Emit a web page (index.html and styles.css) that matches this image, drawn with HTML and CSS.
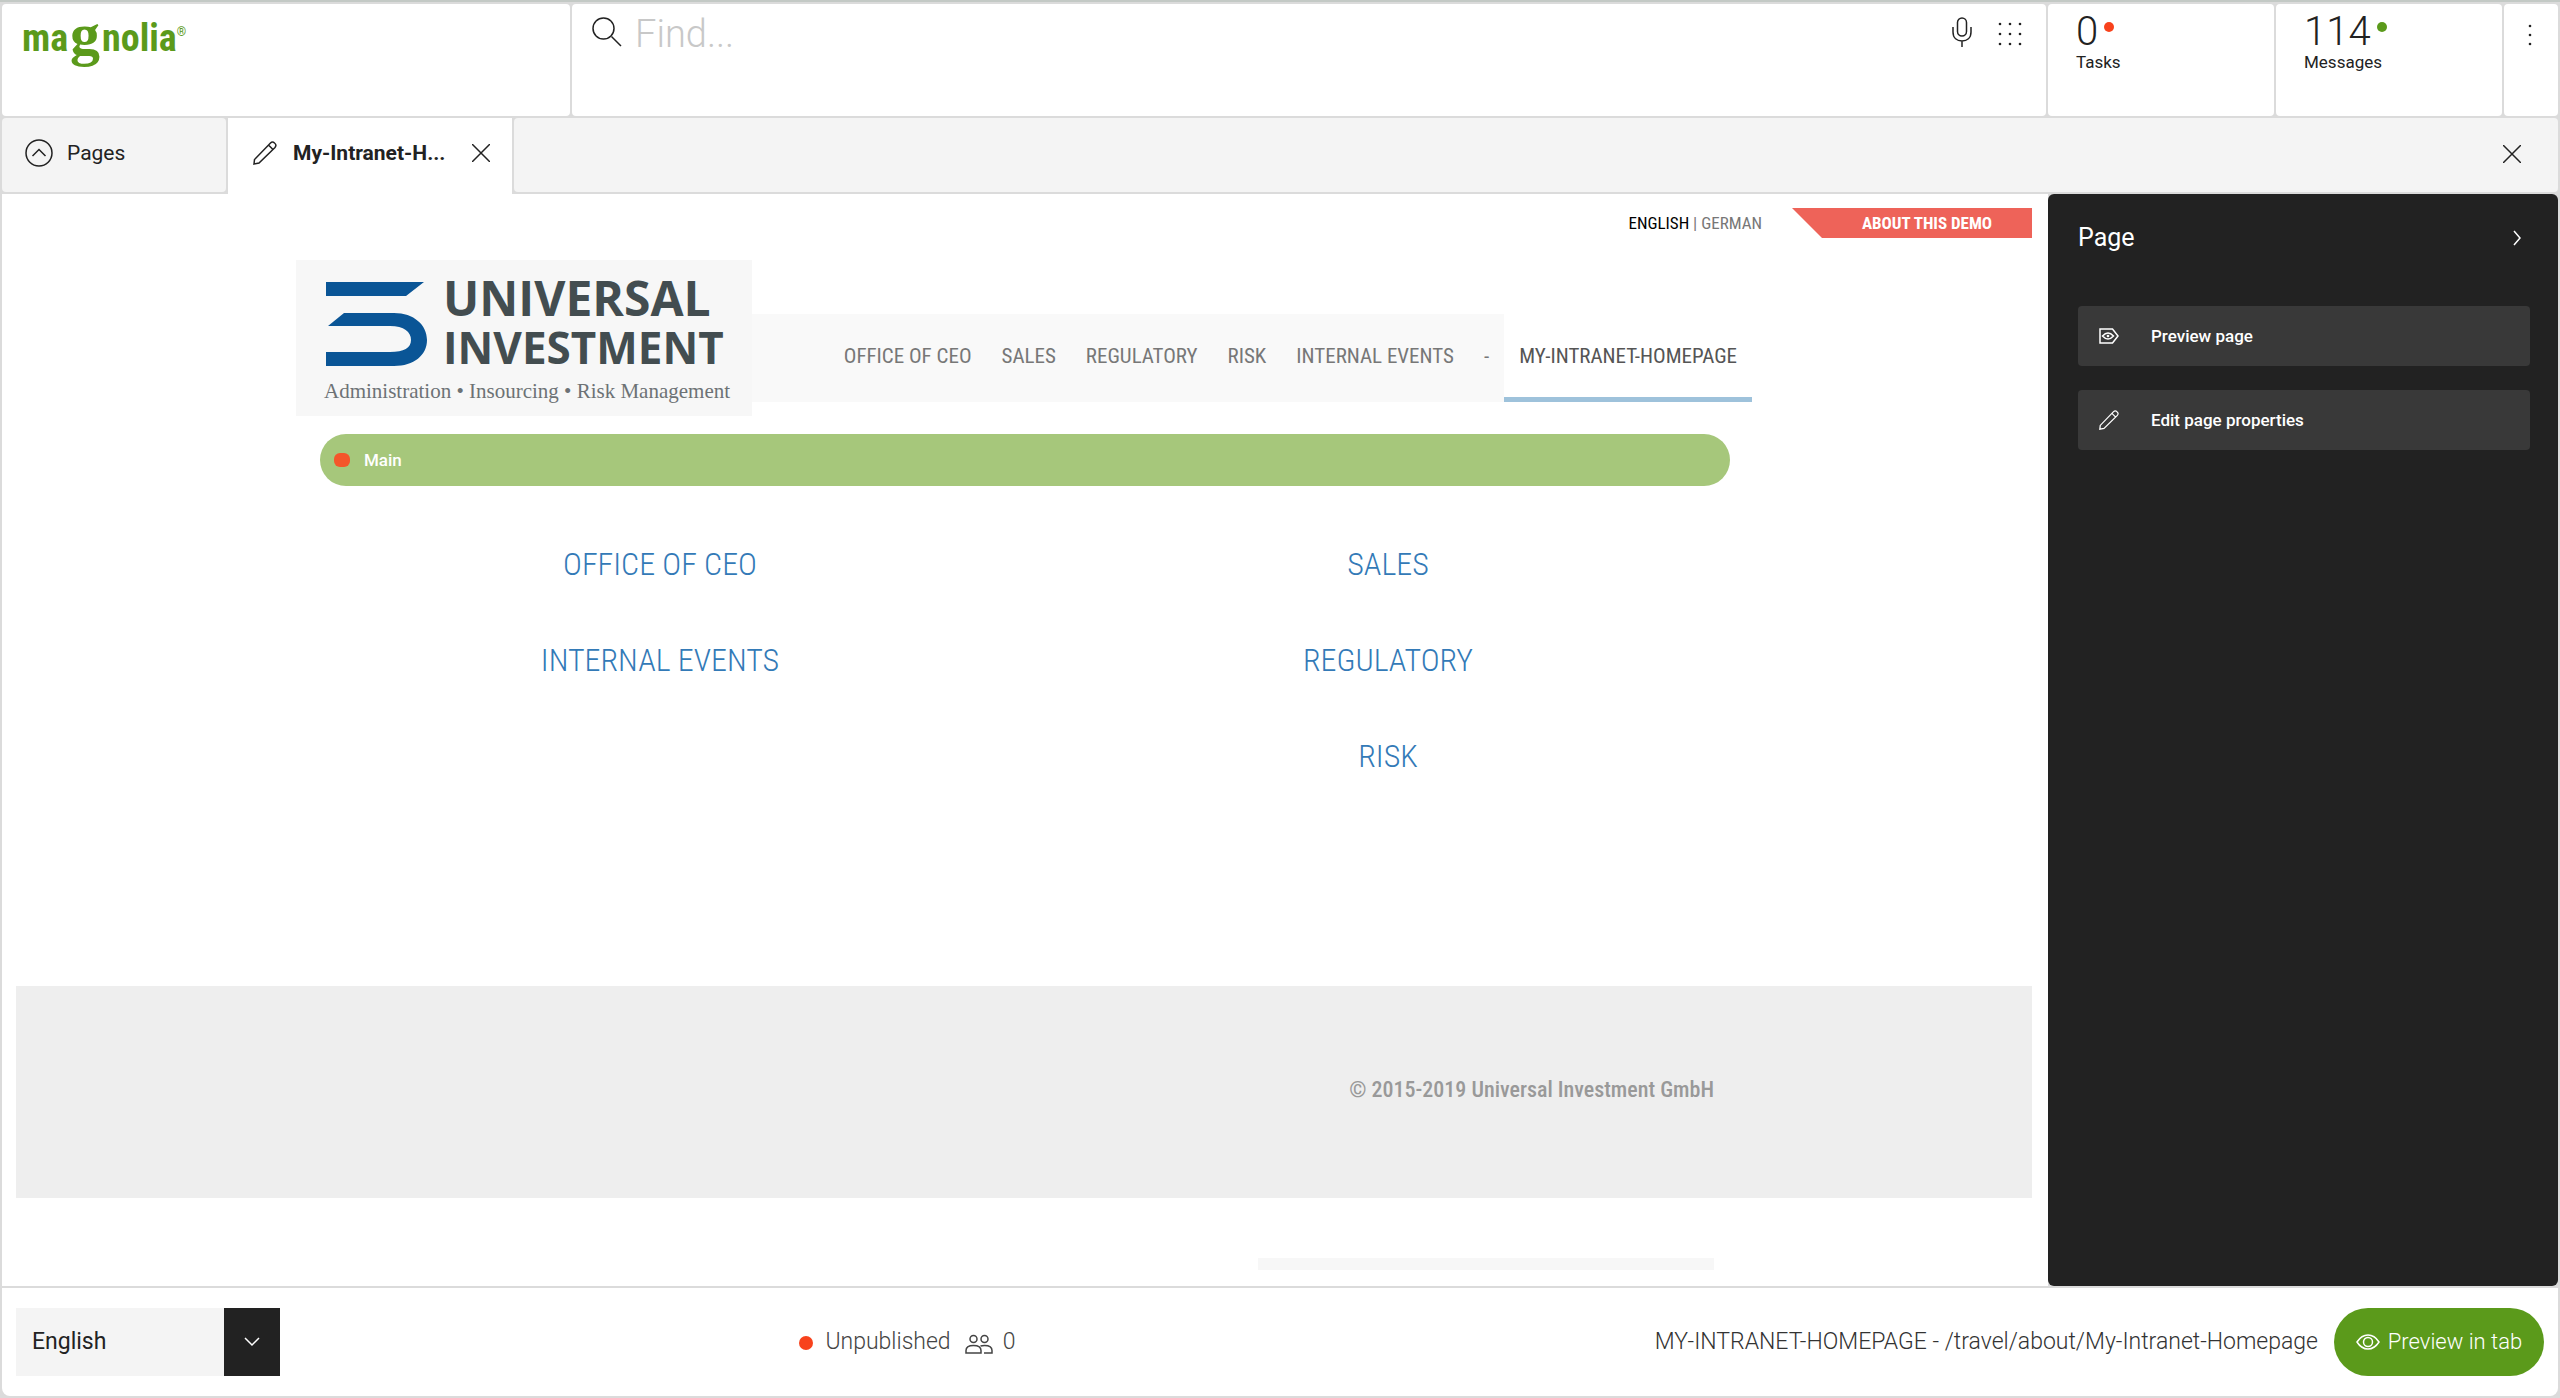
FILE: index.html
```html
<!DOCTYPE html>
<html lang="en">
<head>
<meta charset="utf-8">
<meta name="viewport" content="width=device-width, initial-scale=1">
<title>Magnolia – My-Intranet-Homepage</title>
<link rel="stylesheet" href="styles.css">
</head>
<body>
<svg class="defs" width="0" height="0" aria-hidden="true">
  <symbol id="pencil" viewBox="0 0 24 24"><path d="M1 23 1.500 18.500 17.500 2Q19.500 0 21.500 2Q24 4 22 6.500L6 22ZM15.500 4 20 8.500"/></symbol>
  <symbol id="cross" viewBox="0 0 18 18"><path d="M0 0 18 18M18 0 0 18"/></symbol>
</svg>

<header class="shell">
  <a class="card brand" href="#" aria-label="Magnolia">
    <svg class="brand-logo" width="172" height="52" viewBox="0 0 172 52">
      <text class="brand-sans" x="0" y="31">ma<tspan class="brand-serif" dx="2" dy="3">g</tspan><tspan dx="2" dy="-3">nolia</tspan><tspan class="brand-reg" dy="-15">®</tspan></text>
    </svg>
  </a>
  <form class="card search" role="search">
    <svg class="line" width="30" height="30" viewBox="0 0 30 30"><circle cx="11.500" cy="11.500" r="10.500"/><path d="M19.500 19.500 29 29"/></svg>
    <input class="search-input" type="search" placeholder="Find..." aria-label="Find">
    <button class="icon-button" type="button" aria-label="Voice search"><svg class="line" width="20" height="30" viewBox="0 0 20 30"><rect x="5.500" y="1" width="9" height="18" rx="4.500"/><path d="M1 10V15C1 21 5 24 10 24S19 21 19 15V10M10 24V30"/></svg></button>
    <button class="icon-button" type="button" aria-label="Apps"><svg class="dots" width="24" height="24" viewBox="0 0 24 24"><circle cx="2" cy="2" r="1.300"/><circle cx="12" cy="2" r="1.300"/><circle cx="22" cy="2" r="1.300"/><circle cx="2" cy="12" r="1.300"/><circle cx="12" cy="12" r="1.300"/><circle cx="22" cy="12" r="1.300"/><circle cx="2" cy="22" r="1.300"/><circle cx="12" cy="22" r="1.300"/><circle cx="22" cy="22" r="1.300"/></svg></button>
  </form>
  <a class="card counter" href="#"><span class="counter-value">0<i class="badge badge-red"></i></span><span class="counter-label">Tasks</span></a>
  <a class="card counter" href="#"><span class="counter-value">114<i class="badge badge-green"></i></span><span class="counter-label">Messages</span></a>
  <button class="card more" type="button" aria-label="More"><svg class="dots" width="4" height="22" viewBox="0 0 4 22"><circle cx="2" cy="2" r="1.300"/><circle cx="2" cy="11" r="1.300"/><circle cx="2" cy="20" r="1.300"/></svg></button>
</header>

<nav class="tabs" aria-label="Open apps">
  <button class="tab" type="button"><svg class="line" width="28" height="28" viewBox="0 0 28 28"><circle cx="14" cy="14" r="13"/><path d="M7.500 17 14 10.500 20.500 17"/></svg>Pages</button>
  <div class="tab tab-active">
    <button class="tab-name" type="button"><svg class="line" width="24" height="24"><use href="#pencil"/></svg>My-Intranet-H...</button>
    <button class="icon-button" type="button" aria-label="Close tab"><svg class="line" width="18" height="18"><use href="#cross"/></svg></button>
  </div>
  <div class="tab tab-rest"><button class="icon-button" type="button" aria-label="Close app"><svg class="line" width="18" height="18"><use href="#cross"/></svg></button></div>
</nav>

<div class="workspace">
  <main class="site">
    <div class="site-top">
      <p class="languages"><a class="current" href="#">ENGLISH</a> | <a href="#">GERMAN</a></p>
      <a class="ribbon" href="#">ABOUT THIS DEMO</a>
    </div>
    <div class="container">
      <div class="site-head">
        <svg class="company" width="456" height="156" viewBox="0 0 456 156" role="img" aria-label="Universal Investment">
          <path class="company-mark" d="M30 22H128L110 36H30ZM32 66 48 53H98C118 53 131 65 131 80C131 95 118 106 98 106H30V92H94C108 92 115 88 115 80C115 72 108 66 94 66Z"/>
          <text class="company-name company-name-wide" x="147" y="56">UNIVERSAL</text>
          <text class="company-name" x="147" y="104">INVESTMENT</text>
          <text class="company-claim" x="28" y="138">Administration • Insourcing • Risk Management</text>
        </svg>
        <nav class="menu" aria-label="Site">
          <a href="#">OFFICE OF CEO</a><a href="#">SALES</a><a href="#">REGULATORY</a><a href="#">RISK</a><a href="#">INTERNAL EVENTS</a><a href="#">-</a><a class="menu-current" href="#">MY-INTRANET-HOMEPAGE</a>
        </nav>
      </div>
      <div class="area-bar"><i class="area-status"></i>Main</div>
      <div class="links">
        <ul><li><a href="#">OFFICE OF CEO</a></li><li><a href="#">INTERNAL EVENTS</a></li></ul>
        <ul><li><a href="#">SALES</a></li><li><a href="#">REGULATORY</a></li><li><a href="#">RISK</a></li></ul>
      </div>
    </div>
    <footer class="site-footer"><p class="copyright">© 2015-2019 Universal Investment GmbH</p></footer>
    <div class="container container-end"><div class="strip"></div></div>
  </main>

  <aside class="panel">
    <div class="panel-head"><h2>Page</h2><button class="icon-button" type="button" aria-label="Collapse"><svg class="line" width="8" height="16" viewBox="0 0 8 16"><path d="M1 1 7 8 1 15"/></svg></button></div>
    <button class="action" type="button"><svg class="line" width="20" height="16" viewBox="0 0 20 16"><path d="M1 1H13.500L19 8 13.500 15H1Z"/><path d="M3.500 8Q9 2 14.500 8Q9 14 3.500 8Z"/><circle cx="9" cy="8" r=".6"/></svg>Preview page</button>
    <button class="action" type="button"><svg class="line" width="20" height="20"><use href="#pencil"/></svg>Edit page properties</button>
  </aside>
</div>

<footer class="status">
  <label class="language">
    <select aria-label="Page language"><option>English</option><option>German</option></select>
    <span class="language-arrow"><svg class="line" width="16" height="10" viewBox="0 0 16 10"><path d="M1 1 8 8 15 1"/></svg></span>
  </label>
  <p class="state"><i class="badge badge-state"></i>Unpublished
    <svg class="line" width="28" height="20" viewBox="0 0 28 20"><circle cx="8.500" cy="5" r="3.500"/><circle cx="19.500" cy="5" r="3.500"/><path d="M1 19V16.500Q1 11.500 8.500 11.500T16 16.500V19ZM15.500 12Q17 11.500 19.500 11.500Q27 11.500 27 16.500V19H19"/></svg>0</p>
  <p class="path">MY-INTRANET-HOMEPAGE - /travel/about/My-Intranet-Homepage</p>
  <button class="preview" type="button"><svg class="line" width="24" height="16" viewBox="0 0 24 16"><path d="M1 8Q5.500 1 12 1T23 8Q18.500 15 12 15T1 8Z"/><circle cx="12" cy="8" r="4.500"/></svg>Preview in tab</button>
</footer>
</body>
</html>
```
FILE: styles.css
```css
* { box-sizing: border-box; }

body {
  display: flex;
  flex-direction: column;
  gap: 2px;
  min-height: 100vh;
  margin: 0;
  padding: 2px;
  border-top: 2px solid #c3c9c5;
  background: #dbdbdb;
  color: #222;
  font: 300 23px/32px Roboto, sans-serif;
}

a { color: inherit; text-decoration: none; }
p, h2, ul { margin: 0; padding: 0; }
ul { list-style: none; }
button, input, select { margin: 0; padding: 0; border: 0; background: none; color: inherit; font: inherit; }
svg { display: block; flex: none; }

.defs { position: absolute; }
.line { fill: none; stroke: currentColor; stroke-width: 1.5; }
.dots { fill: currentColor; }
.icon-button { display: flex; }

/* Top bar */
.shell {
  display: grid;
  grid-template-columns: 568px 1fr 226px 226px 54px;
  gap: 2px;
  height: 112px;
}
.card { border-radius: 4px; background: #fff; }
.brand { padding: 16px 20px; }
.brand-logo { overflow: visible; }
.brand-sans { fill: #5b9a1b; font: 700 38px "Roboto Condensed", Roboto, sans-serif; }
.brand-serif { font: 700 60px "Liberation Serif", serif; }
.brand-reg { font: 400 12px Roboto, sans-serif; }

.search { display: flex; align-items: flex-start; padding: 13px 24px 0 20px; }
.search-input {
  flex: 1;
  height: 44px;
  margin: -5px 0 0 13px;
  outline: 0;
  font-size: 38px;
}
.search-input::placeholder { color: #c8c8c8; opacity: 1; }
.search .icon-button { margin-left: 26px; }
.search .icon-button:last-child { margin-top: 5px; }

.counter { display: flex; flex-direction: column; padding: 8px 28px; }
.counter-value { display: flex; gap: 6px; font-size: 40px; line-height: 40px; }
.counter-label { font-size: 17px; font-weight: 400; line-height: 20px; }
.badge { width: 10px; height: 10px; margin-top: 10px; border-radius: 50%; }
.badge-red, .badge-state { background: #f8421c; }
.badge-green { background: #5b9a1b; }
.more { display: flex; justify-content: center; padding: 20px 2px 0 0; }

/* App tabs */
.tabs { display: flex; gap: 2px; height: 74px; font-size: 21px; }
.tab { display: flex; align-items: center; border-radius: 4px; background: #f4f4f4; }
button.tab { width: 224px; gap: 14px; padding: 0 23px 4px; font-weight: 400; }
.tab-active { width: 284px; height: 76px; padding: 0 22px 6px 25px; border-radius: 0; background: #fff; }
.tab-name { display: flex; flex: 1; align-items: center; gap: 16px; font-weight: 700; }
.tab-rest { flex: 1; justify-content: flex-end; padding: 0 37px 2px; }

/* Edited page and action panel */
.workspace { display: grid; flex: 1; grid-template-columns: 1fr 510px; }
.site {
  padding: 14px 16px 0 14px;
  background: #fff;
  font-family: "Roboto Condensed", Roboto, sans-serif;
}
.site-top { display: flex; align-items: center; justify-content: flex-end; gap: 30px; height: 30px; font-size: 17px; font-weight: 400; }
.languages { color: #777; }
.languages .current { color: #000; }
.ribbon {
  width: 240px;
  padding-left: 30px;
  background: #ee6359;
  clip-path: polygon(0 0, 100% 0, 100% 100%, 30px 100%);
  color: #fff;
  font-weight: 700;
  line-height: 30px;
  text-align: center;
}

.container { width: 100%; max-width: 1456px; margin: 0 auto; }
.site-head { display: flex; align-items: center; padding-top: 22px; }
.company { background: #f7f7f7; }
.company-mark { fill: #0a5596; }
.company-name { fill: #434d50; font: 700 44px "Open Sans", sans-serif; }
.company-name-wide { font-size: 48px; }
.company-claim { fill: #6d7275; font: 400 21px "Liberation Serif", serif; }

.menu {
  display: flex;
  flex: 1;
  justify-content: flex-end;
  height: 88px;
  margin-top: 40px;
  background: #f9f9f9;
  color: #777;
  font-size: 21px;
  font-weight: 400;
  line-height: 84px;
}
.menu a { padding: 0 15px; }
.menu-current { border-bottom: 5px solid #9ec2db; background: #fff; color: #555; }

.area-bar {
  display: flex;
  align-items: center;
  gap: 14px;
  height: 52px;
  margin: 18px 22px 0 24px;
  padding: 0 14px;
  border-radius: 26px;
  background: #a6c77b;
  color: #fff;
  font: 500 17px Roboto, sans-serif;
}
.area-status { width: 16px; height: 14px; border-radius: 6px; background: #f4562a; }

.links {
  display: grid;
  grid-template-columns: 1fr 1fr;
  min-height: 500px;
  padding-top: 54px;
  color: #337ab7;
  font-size: 32px;
  line-height: 48px;
  text-align: center;
}
.links li { margin-bottom: 48px; }

.site-footer { display: flex; justify-content: center; background: #eee; }
.copyright {
  width: 1456px;
  padding: 88px 38px 92px;
  color: #999;
  font-size: 22px;
  font-weight: 500;
  text-align: right;
}
.container-end { display: flex; justify-content: flex-end; padding: 60px 38px 14px; }
.strip { width: 456px; height: 12px; background: #f7f7f7; }

.panel { padding: 26px 28px 26px 30px; border-radius: 6px; background: #222; color: #fff; }
.panel-head { display: flex; align-items: center; justify-content: space-between; margin-bottom: 50px; padding: 0 9px 0 0; }
.panel h2 { font-size: 25px; font-weight: 400; line-height: 36px; }
.action {
  display: grid;
  grid-template-columns: 52px 1fr;
  align-items: center;
  width: 100%;
  height: 60px;
  margin-bottom: 24px;
  padding: 0 21px;
  border-radius: 4px;
  background: #393939;
  font-size: 17px;
  font-weight: 500;
  text-align: left;
}

/* Status bar */
.status { display: flex; align-items: center; height: 108px; padding: 0 14px; border-radius: 0 0 8px 8px; background: #fff; }
.language { display: flex; width: 264px; height: 68px; background: #f4f4f4; font-weight: 400; }
.language select { flex: 1; width: 208px; padding-left: 16px; appearance: none; }
.language-arrow { display: flex; align-items: center; justify-content: center; width: 56px; background: #222; color: #fff; }
.state { display: flex; flex: 1; align-items: center; justify-content: center; padding-right: 120px; color: #444; }
.state .line { margin: 4px 10px 0 14px; }
.badge-state { width: 14px; height: 14px; margin: 2px 12px 0 0; }
.path { margin-right: 16px; color: #333; }
.preview {
  display: flex;
  align-items: center;
  justify-content: center;
  gap: 8px;
  width: 210px;
  height: 68px;
  border-radius: 34px;
  background: #5b9a1b;
  color: #fff;
  font-size: 22px;
  font-weight: 300;
}
```
